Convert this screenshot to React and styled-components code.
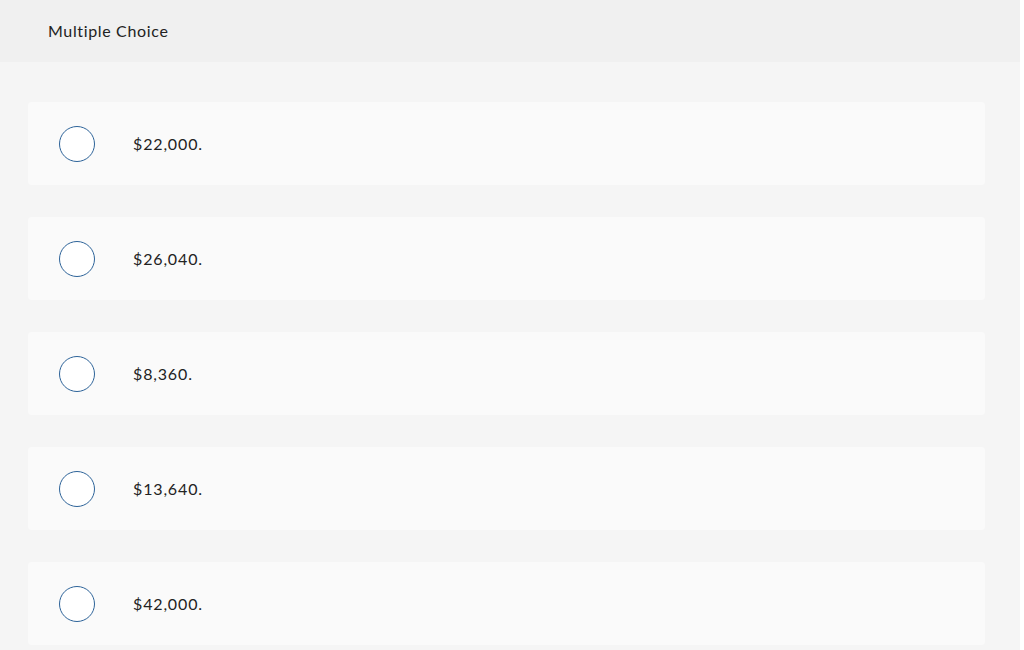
import React from "react";
import styled, { createGlobalStyle } from "styled-components";

const Global = createGlobalStyle`
  html, body { margin: 0; padding: 0; background: #ffffff; }
  body { font-family: Lato, "Open Sans", Arial, sans-serif; color: #222; }
`;

const Page = styled.div`
  width: 1020px;
  min-height: 650px;
  background: #f5f5f5;
`;

const Header = styled.header`
  height: 62px;
  background: #f0f0f0;
  display: flex;
  align-items: center;
  padding-left: 48px;
  padding-bottom: 1px;
  box-sizing: border-box;
  font-size: 16px;
  letter-spacing: 0.65px;
  color: #222;
`;

const List = styled.div`
  display: flex;
  flex-direction: column;
  gap: 32px;
  padding: 40px 35px 0 28px;
`;

const Card = styled.label`
  height: 83px;
  background: #fafafa;
  border-radius: 4px;
  display: flex;
  align-items: center;
  padding-left: 31px;
  box-sizing: border-box;
  cursor: pointer;
`;

const Radio = styled.span`
  width: 36px;
  height: 36px;
  box-sizing: border-box;
  border-radius: 50%;
  border: 1.8px solid #2d6399;
  background: #ffffff;
  flex-shrink: 0;
`;

const Label = styled.span`
  margin-left: 38px;
  font-size: 16px;
  letter-spacing: 0.85px;
  color: #222;
`;

const options = ["$22,000.", "$26,040.", "$8,360.", "$13,640.", "$42,000."];

export default function App() {
  return (
    <>
      <Global />
      <Page>
        <Header>Multiple Choice</Header>
        <List>
          {options.map((o) => (
            <Card key={o}>
              <Radio />
              <Label>{o}</Label>
            </Card>
          ))}
        </List>
      </Page>
    </>
  );
}
